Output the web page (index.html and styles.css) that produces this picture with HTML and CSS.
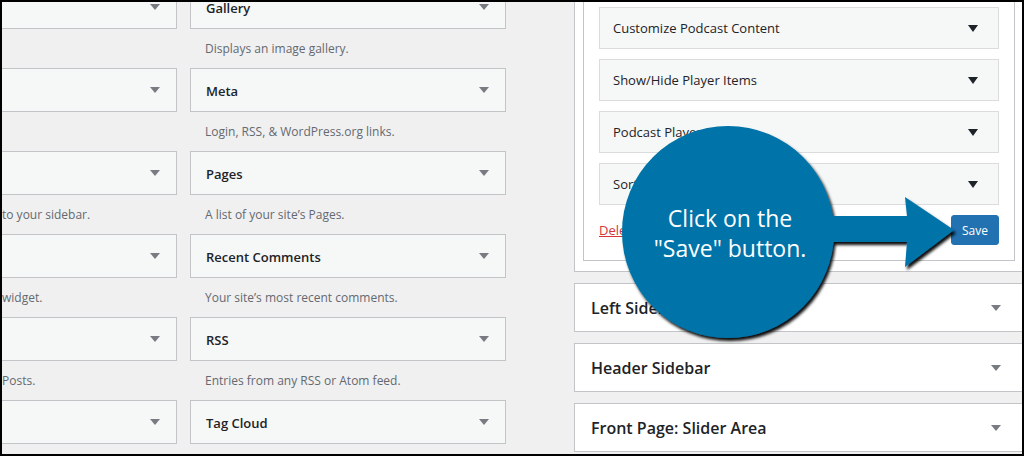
FILE: index.html
```html
<!DOCTYPE html>
<html>
<head>
  <title>Widgets</title>
  <link rel="stylesheet" href="styles.css">
</head>
<body>
  <div class="frame">
    <div class="widgets">
      <div class="widget-col col-left">
        <div class="widget"><span class="widget-title">Custom HTML</span><span class="arrow"></span></div>
        <div class="widget-desc"></div>
        <div class="widget"><span class="widget-title">Image</span><span class="arrow"></span></div>
        <div class="widget-desc"></div>
        <div class="widget"><span class="widget-title">Navigation Menu</span><span class="arrow"></span></div>
        <div class="widget-desc">to your sidebar.</div>
        <div class="widget"><span class="widget-title">Podcast Player</span><span class="arrow"></span></div>
        <div class="widget-desc">widget.</div>
        <div class="widget"><span class="widget-title">Recent Posts</span><span class="arrow"></span></div>
        <div class="widget-desc">Posts.</div>
        <div class="widget"><span class="widget-title">Search</span><span class="arrow"></span></div>
      </div>

      <div class="widget-col">
        <div class="widget"><span class="widget-title">Gallery</span><span class="arrow"></span></div>
        <div class="widget-desc">Displays an image gallery.</div>
        <div class="widget"><span class="widget-title">Meta</span><span class="arrow"></span></div>
        <div class="widget-desc">Login, RSS, &amp; WordPress.org links.</div>
        <div class="widget"><span class="widget-title">Pages</span><span class="arrow"></span></div>
        <div class="widget-desc">A list of your site’s Pages.</div>
        <div class="widget"><span class="widget-title">Recent Comments</span><span class="arrow"></span></div>
        <div class="widget-desc">Your site’s most recent comments.</div>
        <div class="widget"><span class="widget-title">RSS</span><span class="arrow"></span></div>
        <div class="widget-desc">Entries from any RSS or Atom feed.</div>
        <div class="widget"><span class="widget-title">Tag Cloud</span><span class="arrow"></span></div>
      </div>
    </div>

    <div class="sidebars">
      <div class="sidebar-open">
        <div class="widget-form">
          <div class="section"><span>Customize Podcast Content</span><span class="arrow-dark"></span></div>
          <div class="section"><span>Show/Hide Player Items</span><span class="arrow-dark"></span></div>
          <div class="section"><span>Podcast Player Styles</span><span class="arrow-dark"></span></div>
          <div class="section"><span>Sort Options</span><span class="arrow-dark"></span></div>
          <div class="form-actions">
            <a href="#" class="delete-link">Delete</a>
            <button class="save-btn">Save</button>
          </div>
        </div>
      </div>

      <div class="sidebar-box"><span>Left Sidebar</span><span class="arrow"></span></div>
      <div class="sidebar-box"><span>Header Sidebar</span><span class="arrow"></span></div>
      <div class="sidebar-box"><span>Front Page: Slider Area</span><span class="arrow"></span></div>
    </div>

    <!-- callout over the screenshot -->
    <div class="callout">
      <svg width="360" height="240" viewBox="0 0 360 240">
        <defs>
          <filter id="shade" x="-10%" y="-10%" width="130%" height="130%">
            <feDropShadow dx="2" dy="3" stdDeviation="1.6" flood-color="#000" flood-opacity="0.95"/>
          </filter>
        </defs>
        <g filter="url(#shade)" fill="#0073a8">
          <polygon points="190,96 287,96 285,77 334,110 285,147 287,122 190,122"/>
          <circle cx="108" cy="112" r="106"/>
        </g>
      </svg>
      <div class="callout-text">Click on the<br>"Save" button.</div>
    </div>
  </div>
</body>
</html>
```

FILE: styles.css
```css
/* page frame */
body {
  margin: 0;
  background-color: #000;
  font-family: "Open Sans", "Noto Sans", Arial, sans-serif;
}

.frame {
  position: relative;
  width: 1024px;
  height: 456px;
  box-sizing: border-box;
  border: 2px solid #000;
  background-color: #f0f0f1;
  overflow: hidden;
  display: flex;
}

/* available widgets */
.widgets {
  display: flex;
  gap: 13px;
  margin-left: -141px;
  margin-top: -17px;
}

.widget-col {
  width: 316px;
  flex-shrink: 0;
}

.widget {
  height: 44px;
  box-sizing: border-box;
  border: 1px solid #c3c4c7;
  background-color: #f6f7f7;
  display: flex;
  align-items: center;
  justify-content: space-between;
  padding: 0 16px 0 15px;
}

.widget-title {
  font-size: 13px;
  line-height: 14px;
  padding-top: 2px;
  font-weight: 600;
  color: #1d2327;
}

.widget-desc {
  height: 39px;
  line-height: 39px;
  padding-left: 15px;
  font-size: 12px;
  color: #646970;
  white-space: nowrap;
}

/* only the right end of the left column is on screen */
.col-left .widget-title {
  visibility: hidden;
}

.col-left .widget-desc {
  padding-left: 141px;
}

.arrow {
  width: 0;
  height: 0;
  border-left: 5px solid transparent;
  border-right: 5px solid transparent;
  border-top: 6px solid #787c82;
}

/* sidebars */
.sidebars {
  margin-left: 68px;
  width: 460px;
  flex-shrink: 0;
}

.sidebar-open {
  margin-top: -41px;
  border: 1px solid #c3c4c7;
  background-color: #fff;
  padding: 0 8px 10px 8px;
}

.widget-form {
  border: 1px solid #c3c4c7;
  padding: 44px 15px 15px 15px;
  width: 400px;
}

.section {
  height: 42px;
  box-sizing: border-box;
  border: 1px solid #dcdcde;
  background-color: #f6f7f7;
  margin-bottom: 10px;
  display: flex;
  align-items: center;
  justify-content: space-between;
  padding: 0 20px 0 13px;
  font-size: 13px;
  color: #1d2327;
}

.arrow-dark {
  width: 0;
  height: 0;
  border-left: 5px solid transparent;
  border-right: 5px solid transparent;
  border-top: 7px solid #1d2327;
}

.form-actions {
  display: flex;
  justify-content: space-between;
  align-items: center;
  margin-top: 10px;
}

.delete-link {
  color: #d63638;
  font-size: 13px;
}

.save-btn {
  height: 30px;
  padding: 0 10px;
  border: 1px solid #2271b1;
  border-radius: 3px;
  background-color: #2271b1;
  color: #fff;
  font-family: "Open Sans", Arial, sans-serif;
  font-size: 12px;
}

.sidebar-box {
  height: 49px;
  box-sizing: border-box;
  margin-top: 11px;
  border: 1px solid #c3c4c7;
  background-color: #fff;
  display: flex;
  align-items: center;
  justify-content: space-between;
  padding: 0 32px 0 16px;
  font-size: 16px;
  font-weight: 600;
  color: #1d2327;
}

/* blue callout */
.callout {
  position: absolute;
  left: 618px;
  top: 118px;
  width: 360px;
  height: 240px;
}

.callout svg {
  display: block;
}

.callout-text {
  position: absolute;
  left: 0;
  top: 83px;
  width: 220px;
  text-align: center;
  color: #fff;
  font-size: 23px;
  line-height: 30px;
}
```
